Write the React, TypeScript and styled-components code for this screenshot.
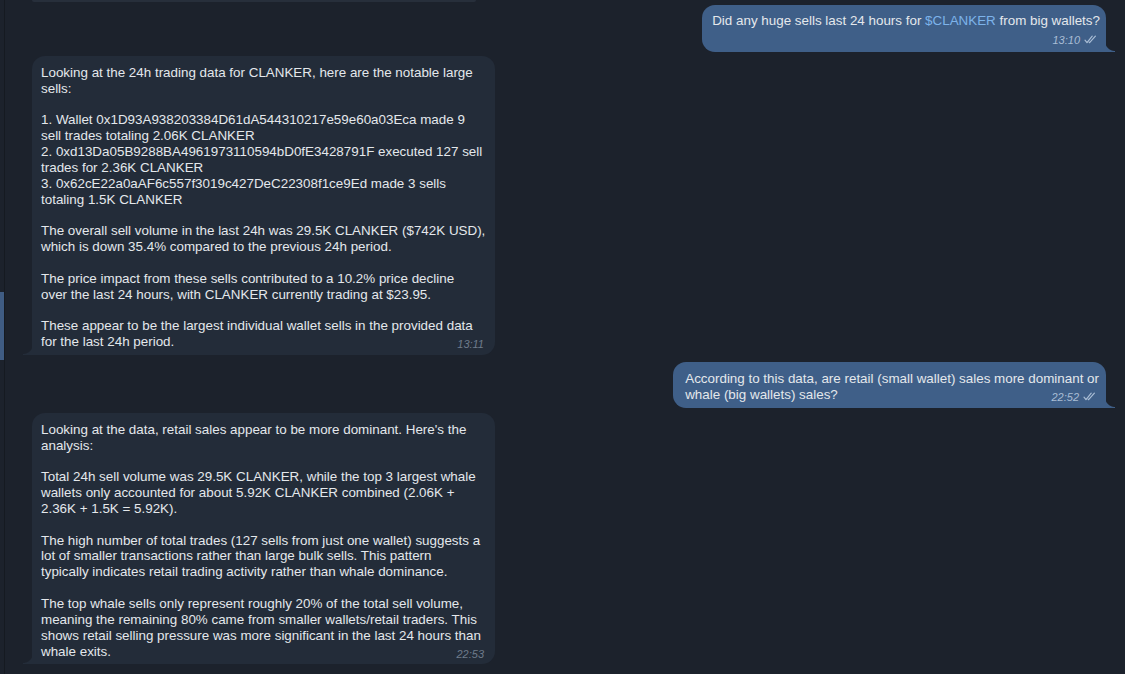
import React from "react";
import styled, { createGlobalStyle, css } from "styled-components";

const GlobalStyle = createGlobalStyle`
  html, body { margin: 0; padding: 0; background: #1c222c; }
  * { box-sizing: border-box; }
`;

const Page = styled.div`
  width: 1125px;
  height: 674px;
  display: flex;
  background: #1c222c;
  overflow: hidden;
  font-family: "Liberation Sans", Arial, sans-serif;
  font-size: 13.4px;
  color: #e4e8ec;
  -webkit-font-smoothing: antialiased;
`;

const Rail = styled.div`
  flex: none;
  width: 5px;
  border-right: 1px solid #151a21;
  display: flex;
  flex-direction: column;
`;

const RailThumb = styled.div`
  margin-top: 292px;
  height: 68px;
  width: 4px;
  background: #3f5c83;
`;

const Thread = styled.div`
  flex: 1;
  display: flex;
  flex-direction: column;
  padding: 0 9px 0 27px;
`;

const TopCut = styled.div`
  width: 444px;
  height: 2px;
  background: #272f3b;
  border-radius: 0 0 3px 3px;
`;

const Bubble = styled.div<{ $out?: boolean; $top: number; $pad: string }>`
  position: relative;
  margin-top: ${(p) => p.$top}px;
  padding: ${(p) => p.$pad};
  ${(p) =>
    p.$out
      ? css`
          align-self: flex-end;
          margin-right: 10px;
          background: #3f5f88;
          border-radius: 13px 13px 0 13px;
          &::after {
            content: "";
            position: absolute;
            right: -9px;
            bottom: 0;
            width: 10px;
            height: 11px;
            background: radial-gradient(circle at 100% 0, transparent 9.5px, #3f5f88 10.5px);
          }
        `
      : css`
          align-self: flex-start;
          width: 463px;
          background: #232c39;
          border-radius: 13px 13px 13px 0;
          &::after {
            content: "";
            position: absolute;
            left: -9px;
            bottom: 0;
            width: 10px;
            height: 11px;
            background: radial-gradient(circle at 0 0, transparent 9.5px, #232c39 10.5px);
          }
        `}
`;

const Line = styled.div`
  white-space: pre;
  height: 15.85px;
  line-height: 15.85px;
`;

const LastRow = styled.div`
  display: flex;
  justify-content: space-between;
  align-items: baseline;
  height: 15.85px;
  line-height: 15.85px;
  white-space: pre;
`;

const MetaRow = styled.div`
  display: flex;
  justify-content: flex-end;
  height: 14px;
  margin-top: 2px;
`;

const Meta = styled.span<{ $out?: boolean }>`
  display: inline-flex;
  align-items: center;
  gap: 4px;
  margin-left: 14px;
  margin-right: ${(p) => (p.$out ? 3 : 1)}px;
  font-style: italic;
  font-size: 11px;
  line-height: 14px;
  color: ${(p) => (p.$out ? "#a9bdd5" : "#6e7b8b")};
  transform: translateY(2px);
`;

const Link = styled.span`
  color: #7db3ea;
`;

const Checks = () => (
  <svg width="13" height="9" viewBox="0 0 13 9" fill="none" stroke="#a9bdd5" strokeWidth="1.2" strokeLinecap="round" strokeLinejoin="round">
    <path d="M1 5.2 L3 7.6 L8.2 1.2" />
    <path d="M5.2 7.4 L5.6 7.6 L11.4 1.2" />
  </svg>
);

type Para = string[];

const Body = ({ lines, time, out }: { lines: React.ReactNode[]; time: string; out?: boolean }) => (
  <>
    {lines.slice(0, -1).map((l, i) => (
      <Line key={i}>{l === "" ? " " : l}</Line>
    ))}
    <LastRow>
      <span>{lines[lines.length - 1]}</span>
      <Meta $out={out}>
        {time}
        {out && <Checks />}
      </Meta>
    </LastRow>
  </>
);

const reply1: Para = [
  "Looking at the 24h trading data for CLANKER, here are the notable large",
  "sells:",
  "",
  "1. Wallet 0x1D93A938203384D61dA544310217e59e60a03Eca made 9",
  "sell trades totaling 2.06K CLANKER",
  "2. 0xd13Da05B9288BA4961973110594bD0fE3428791F executed 127 sell",
  "trades for 2.36K CLANKER",
  "3. 0x62cE22a0aAF6c557f3019c427DeC22308f1ce9Ed made 3 sells",
  "totaling 1.5K CLANKER",
  "",
  "The overall sell volume in the last 24h was 29.5K CLANKER ($742K USD),",
  "which is down 35.4% compared to the previous 24h period.",
  "",
  "The price impact from these sells contributed to a 10.2% price decline",
  "over the last 24 hours, with CLANKER currently trading at $23.95.",
  "",
  "These appear to be the largest individual wallet sells in the provided data",
  "for the last 24h period.",
];

const reply2: Para = [
  "Looking at the data, retail sales appear to be more dominant. Here's the",
  "analysis:",
  "",
  "Total 24h sell volume was 29.5K CLANKER, while the top 3 largest whale",
  "wallets only accounted for about 5.92K CLANKER combined (2.06K +",
  "2.36K + 1.5K = 5.92K).",
  "",
  "The high number of total trades (127 sells from just one wallet) suggests a",
  "lot of smaller transactions rather than large bulk sells. This pattern",
  "typically indicates retail trading activity rather than whale dominance.",
  "",
  "The top whale sells only represent roughly 20% of the total sell volume,",
  "meaning the remaining 80% came from smaller wallets/retail traders. This",
  "shows retail selling pressure was more significant in the last 24 hours than",
  "whale exits.",
];

export default function App() {
  return (
    <>
      <GlobalStyle />
      <Page>
        <Rail>
          <RailThumb />
        </Rail>
        <Thread>
          <TopCut />
          <Bubble $out $top={3} $pad="8px 6px 7px 10px">
            <Line>
              Did any huge sells last 24 hours for <Link>$CLANKER</Link> from big wallets?
            </Line>
            <MetaRow>
              <Meta $out>
                13:10
                <Checks />
              </Meta>
            </MetaRow>
          </Bubble>
          <Bubble $top={4} $pad="9px 10px 5px 9px">
            <Body lines={reply1} time="13:11" />
          </Bubble>
          <Bubble $out $top={7} $pad="9px 7px 5px 12px">
            <Body
              out
              time="22:52"
              lines={[
                "According to this data, are retail (small wallet) sales more dominant or",
                "whale (big wallets) sales?",
              ]}
            />
          </Bubble>
          <Bubble $top={5} $pad="9px 10px 5px 9px">
            <Body lines={reply2} time="22:53" />
          </Bubble>
        </Thread>
      </Page>
    </>
  );
}
